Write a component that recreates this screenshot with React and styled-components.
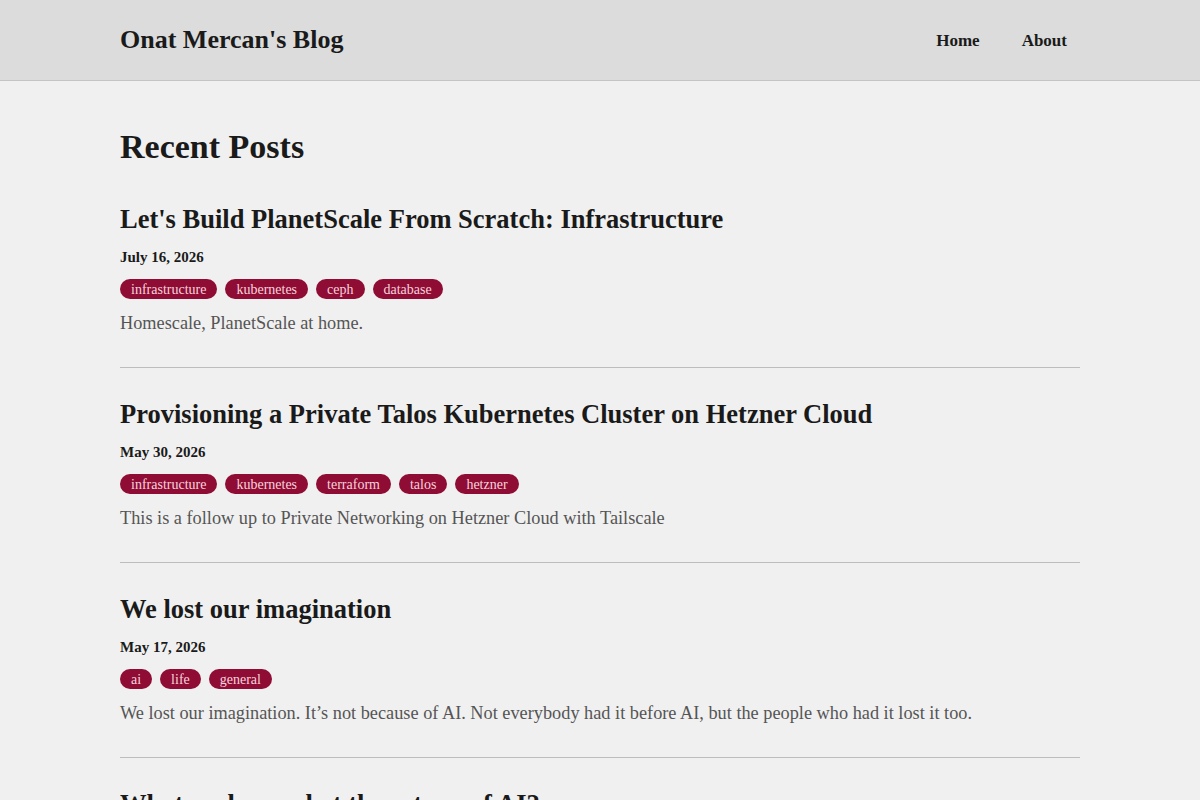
import React from "react";
import styled, { createGlobalStyle } from "styled-components";

const Global = createGlobalStyle`
  html, body { margin: 0; padding: 0; }
  body {
    background: #f0f0f0;
    color: #1a1a1a;
    font-family: "Liberation Serif", "DejaVu Serif", serif;
  }
`;

const Header = styled.header`
  background: #dcdcdc;
  border-bottom: 1px solid #c4c4c4;
  height: 81px;
  box-sizing: border-box;
`;

const HeaderInner = styled.div`
  width: 960px;
  margin: 0 auto;
  height: 100%;
  display: flex;
  align-items: center;
  justify-content: space-between;
`;

const SiteTitle = styled.a`
  font-size: 26px;
  font-weight: 700;
  color: #1a1a1a;
  text-decoration: none;
`;

const Nav = styled.nav`
  display: flex;
  gap: 42px;
  padding: 2px 13px 0 0;
`;

const NavLink = styled.a`
  font-size: 17px;
  font-weight: 700;
  color: #1a1a1a;
  text-decoration: none;
`;

const Main = styled.main`
  width: 960px;
  margin: 0 auto;
  padding-top: 49px;
`;

const PageTitle = styled.h1`
  font-size: 34px;
  font-weight: 700;
  margin: 0 0 37px;
  line-height: 34px;
`;

const Posts = styled.div`
  display: flex;
  flex-direction: column;
`;

const Post = styled.article`
  padding: 0 0 32px;
  margin-bottom: 28px;
  border-bottom: 1px solid #bdbdbd;
`;

const PostTitle = styled.h2`
  font-size: 26.5px;
  font-weight: 700;
  margin: 0;
  line-height: 36px;
`;

const DateLine = styled.div`
  font-size: 15px;
  font-weight: 700;
  margin-top: 10px;
  line-height: 20px;
`;

const Tags = styled.div`
  display: flex;
  gap: 8px;
  margin-top: 12px;
`;

const Tag = styled.span`
  background: #8f0c35;
  color: #f6d3dc;
  font-size: 14px;
  height: 20px;
  line-height: 22px;
  padding: 0 11px;
  border-radius: 10px;
  box-sizing: border-box;
`;

const Excerpt = styled.p`
  font-size: 18.3px;
  color: #555;
  margin: 12px 0 0;
  line-height: 24px;
`;

const posts = [
  {
    title: "Let's Build PlanetScale From Scratch: Infrastructure",
    date: "July 16, 2026",
    tags: ["infrastructure", "kubernetes", "ceph", "database"],
    excerpt: "Homescale, PlanetScale at home.",
  },
  {
    title: "Provisioning a Private Talos Kubernetes Cluster on Hetzner Cloud",
    date: "May 30, 2026",
    tags: ["infrastructure", "kubernetes", "terraform", "talos", "hetzner"],
    excerpt: "This is a follow up to Private Networking on Hetzner Cloud with Tailscale",
  },
  {
    title: "We lost our imagination",
    date: "May 17, 2026",
    tags: ["ai", "life", "general"],
    excerpt:
      "We lost our imagination. It’s not because of AI. Not everybody had it before AI, but the people who had it lost it too.",
  },
  {
    title: "What we learned at the return of AI?",
    date: "May 2, 2026",
    tags: ["ai"],
    excerpt: "",
  },
];

export default function App() {
  return (
    <>
      <Global />
      <Header>
        <HeaderInner>
          <SiteTitle href="#">Onat Mercan's Blog</SiteTitle>
          <Nav>
            <NavLink href="#">Home</NavLink>
            <NavLink href="#">About</NavLink>
          </Nav>
        </HeaderInner>
      </Header>
      <Main>
        <PageTitle>Recent Posts</PageTitle>
        <Posts>
          {posts.map((p) => (
            <Post key={p.title}>
              <PostTitle>{p.title}</PostTitle>
              <DateLine>{p.date}</DateLine>
              <Tags>
                {p.tags.map((t) => (
                  <Tag key={t}>{t}</Tag>
                ))}
              </Tags>
              {p.excerpt && <Excerpt>{p.excerpt}</Excerpt>}
            </Post>
          ))}
        </Posts>
      </Main>
    </>
  );
}
